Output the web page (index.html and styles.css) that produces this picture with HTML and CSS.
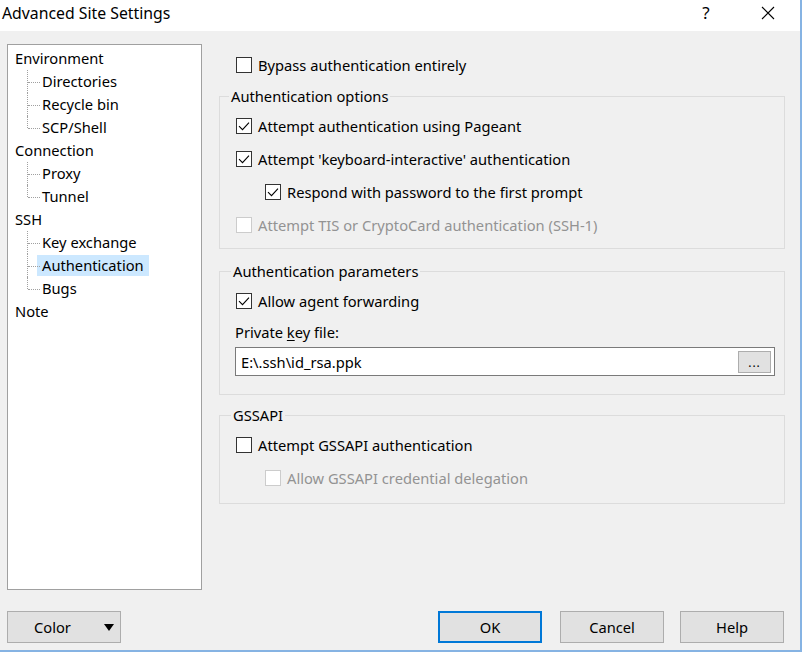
FILE: index.html
```html
<!DOCTYPE html>
<html>
<head>
<meta charset="utf-8">
<link rel="stylesheet" href="styles.css">
</head>
<body>
<div class="window">
  <div class="titlebar">
    <span class="title">Advanced Site Settings</span>
    <span class="tb-btn tb-help">?</span>
    <span class="tb-btn tb-close"><svg width="14" height="14" viewBox="0 0 14 14"><path d="M1 1 L13 13 M13 1 L1 13" stroke="#000" stroke-width="1.1" fill="none"/></svg></span>
  </div>
  <div class="body">
    <div class="main">
      <div class="tree">
        <ul class="tree-root">
          <li class="node"><span class="label">Environment</span>
            <ul class="children">
              <li class="child"><span class="label">Directories</span></li>
              <li class="child"><span class="label">Recycle bin</span></li>
              <li class="child last"><span class="label">SCP/Shell</span></li>
            </ul>
          </li>
          <li class="node"><span class="label">Connection</span>
            <ul class="children">
              <li class="child"><span class="label">Proxy</span></li>
              <li class="child last"><span class="label">Tunnel</span></li>
            </ul>
          </li>
          <li class="node"><span class="label">SSH</span>
            <ul class="children">
              <li class="child"><span class="label">Key exchange</span></li>
              <li class="child"><span class="label selected">Authentication</span></li>
              <li class="child last"><span class="label">Bugs</span></li>
            </ul>
          </li>
          <li class="node"><span class="label">Note</span></li>
        </ul>
      </div>
      <div class="panel">
        <div class="row bypass"><span class="cb"></span><span class="text">Bypass authentication entirely</span></div>

        <div class="group g-options">
          <span class="legend">Authentication options</span>
          <div class="row"><span class="cb checked"><svg width="14" height="14" viewBox="0 0 14 14"><path d="M2 7.2 L5.5 10.7 L12 3.6" stroke="#000" stroke-width="1.1" fill="none"/></svg></span><span class="text">Attempt authentication using Pageant</span></div>
          <div class="row"><span class="cb checked"><svg width="14" height="14" viewBox="0 0 14 14"><path d="M2 7.2 L5.5 10.7 L12 3.6" stroke="#000" stroke-width="1.1" fill="none"/></svg></span><span class="text">Attempt 'keyboard-interactive' authentication</span></div>
          <div class="row indent"><span class="cb checked"><svg width="14" height="14" viewBox="0 0 14 14"><path d="M2 7.2 L5.5 10.7 L12 3.6" stroke="#000" stroke-width="1.1" fill="none"/></svg></span><span class="text">Respond with password to the first prompt</span></div>
          <div class="row disabled"><span class="cb"></span><span class="text">Attempt TIS or CryptoCard authentication (SSH-1)</span></div>
        </div>

        <div class="group g-params">
          <span class="legend">Authentication parameters</span>
          <div class="row"><span class="cb checked"><svg width="14" height="14" viewBox="0 0 14 14"><path d="M2 7.2 L5.5 10.7 L12 3.6" stroke="#000" stroke-width="1.1" fill="none"/></svg></span><span class="text">Allow agent forwarding</span></div>
          <div class="field-label">Private <u>k</u>ey file:</div>
          <div class="file"><span class="file-text">E:\.ssh\id_rsa.ppk</span><span class="browse">...</span></div>
        </div>

        <div class="group g-gss">
          <span class="legend">GSSAPI</span>
          <div class="row"><span class="cb"></span><span class="text">Attempt GSSAPI authentication</span></div>
          <div class="row indent disabled"><span class="cb"></span><span class="text">Allow GSSAPI credential delegation</span></div>
        </div>
      </div>
    </div>
    <div class="buttons">
      <span class="btn btn-color"><span class="btn-color-text">Color</span><span class="arrow"></span></span>
      <span class="btn btn-ok">OK</span>
      <span class="btn btn-cancel">Cancel</span>
      <span class="btn btn-help">Help</span>
    </div>
  </div>
</div>
</body>
</html>
```
FILE: styles.css
```css
html, body {
  margin: 0;
  padding: 0;
  background: #ffffff;
}
body {
  font-family: "Noto Sans", "DejaVu Sans", sans-serif;
  font-size: 14.7px;
  color: #000;
}
.window {
  width: 800px;
  height: 650px;
  background: #f0f0f0;
  border-right: 2px solid #86b3e3;
  border-bottom: 2px solid #86b3e3;
  display: flex;
  flex-direction: column;
}
.titlebar {
  height: 31px;
  background: #fff;
  display: flex;
  align-items: center;
  padding-left: 2px;
  flex: none;
}
.title {
  flex: 1;
  font-size: 15.8px;
  position: relative;
  top: -3px;
}
.tb-btn {
  width: 46px;
  display: flex;
  justify-content: center;
  align-items: center;
  position: relative;
  top: -3px;
}
.tb-help {
  margin-right: 16px;
  font-size: 17px;
}
.tb-close {
  margin-right: 9px;
}
.body {
  flex: 1;
  display: flex;
  flex-direction: column;
  padding: 13px 0 0 7px;
}
.main {
  display: flex;
}
.tree {
  box-sizing: border-box;
  width: 195px;
  height: 546px;
  border: 1px solid #a0a0a0;
  background: #fff;
  padding-top: 2px;
  flex: none;
}
.tree ul {
  list-style: none;
  margin: 0;
  padding: 0;
}
.node {
  padding-left: 7px;
}
.label {
  display: inline-block;
  height: 23px;
  line-height: 23px;
  white-space: nowrap;
}
.label.selected {
  background: #cce8ff;
  height: 21px;
  line-height: 21px;
  margin: 1px 0 1px -5px;
  padding: 0 5px;
  vertical-align: top;
}
.child {
  position: relative;
  padding-left: 27px;
  height: 23px;
}
.child::before {
  content: "";
  position: absolute;
  left: 12px;
  top: 0;
  height: 23px;
  border-left: 1px dotted #a0a0a0;
}
.child.last::before {
  height: 12px;
}
.child::after {
  content: "";
  position: absolute;
  left: 13px;
  top: 12px;
  width: 12px;
  border-top: 1px dotted #a0a0a0;
}
.panel {
  margin-left: 17px;
  width: 566px;
  padding-top: 4px;
  flex: none;
}
.row {
  height: 33px;
  display: flex;
  align-items: center;
  white-space: nowrap;
}
.bypass {
  margin-left: 17px;
}
.indent {
  margin-left: 29px;
}
.cb {
  box-sizing: border-box;
  width: 16px;
  height: 16px;
  border: 1px solid #333;
  background: #fff;
  display: flex;
  align-items: center;
  justify-content: center;
  margin-right: 6px;
  flex: none;
}
.disabled .cb {
  border-color: #cccccc;
}
.disabled .text {
  color: #939393;
}
.group {
  position: relative;
  border: 1px solid #dcdcdc;
  padding: 12px 0 7px 16px;
}
.legend {
  position: absolute;
  top: -11px;
  left: 9px;
  padding: 0 2px;
  line-height: 20px;
  background: #f0f0f0;
  white-space: nowrap;
}
.g-options {
  margin-top: 15px;
}
.g-params {
  margin-top: 22px;
  padding-bottom: 18px;
}
.g-params .legend,
.g-gss .legend {
  left: 11px;
}
.g-gss {
  margin-top: 20px;
  padding-bottom: 9px;
}
.field-label {
  height: 30px;
  line-height: 30px;
  margin-left: -1px;
}
.field-label u {
  text-decoration-thickness: 1px;
  text-underline-offset: 2px;
}
.file {
  box-sizing: border-box;
  margin-left: -1px;
  width: 540px;
  height: 29px;
  border: 1px solid #7a7a7a;
  background: #fff;
  display: flex;
  align-items: center;
  padding-left: 5px;
}
.file-text {
  flex: 1;
}
.browse {
  box-sizing: border-box;
  width: 33px;
  height: 22px;
  margin-right: 3px;
  background: #e1e1e1;
  border: 1px solid #adadad;
  font-size: 12px;
  letter-spacing: 1px;
  display: flex;
  justify-content: center;
  align-items: center;
  line-height: 1;
  padding-top: 2px;
}
.buttons {
  display: flex;
  margin-top: 21px;
}
.btn {
  box-sizing: border-box;
  height: 32px;
  width: 104px;
  background: #e1e1e1;
  border: 1px solid #adadad;
  display: flex;
  align-items: center;
  justify-content: center;
}
.btn-color {
  width: 114px;
  justify-content: flex-start;
}
.btn-color-text {
  margin-left: 26px;
}
.arrow {
  margin-left: 33px;
  width: 0;
  height: 0;
  border-left: 5px solid transparent;
  border-right: 5px solid transparent;
  border-top: 7px solid #000;
}
.btn-ok {
  margin-left: auto;
  border: 2px solid #0078d7;
}
.btn-cancel {
  margin-left: 18px;
}
.btn-help {
  margin-left: 16px;
  margin-right: 16px;
}
```
